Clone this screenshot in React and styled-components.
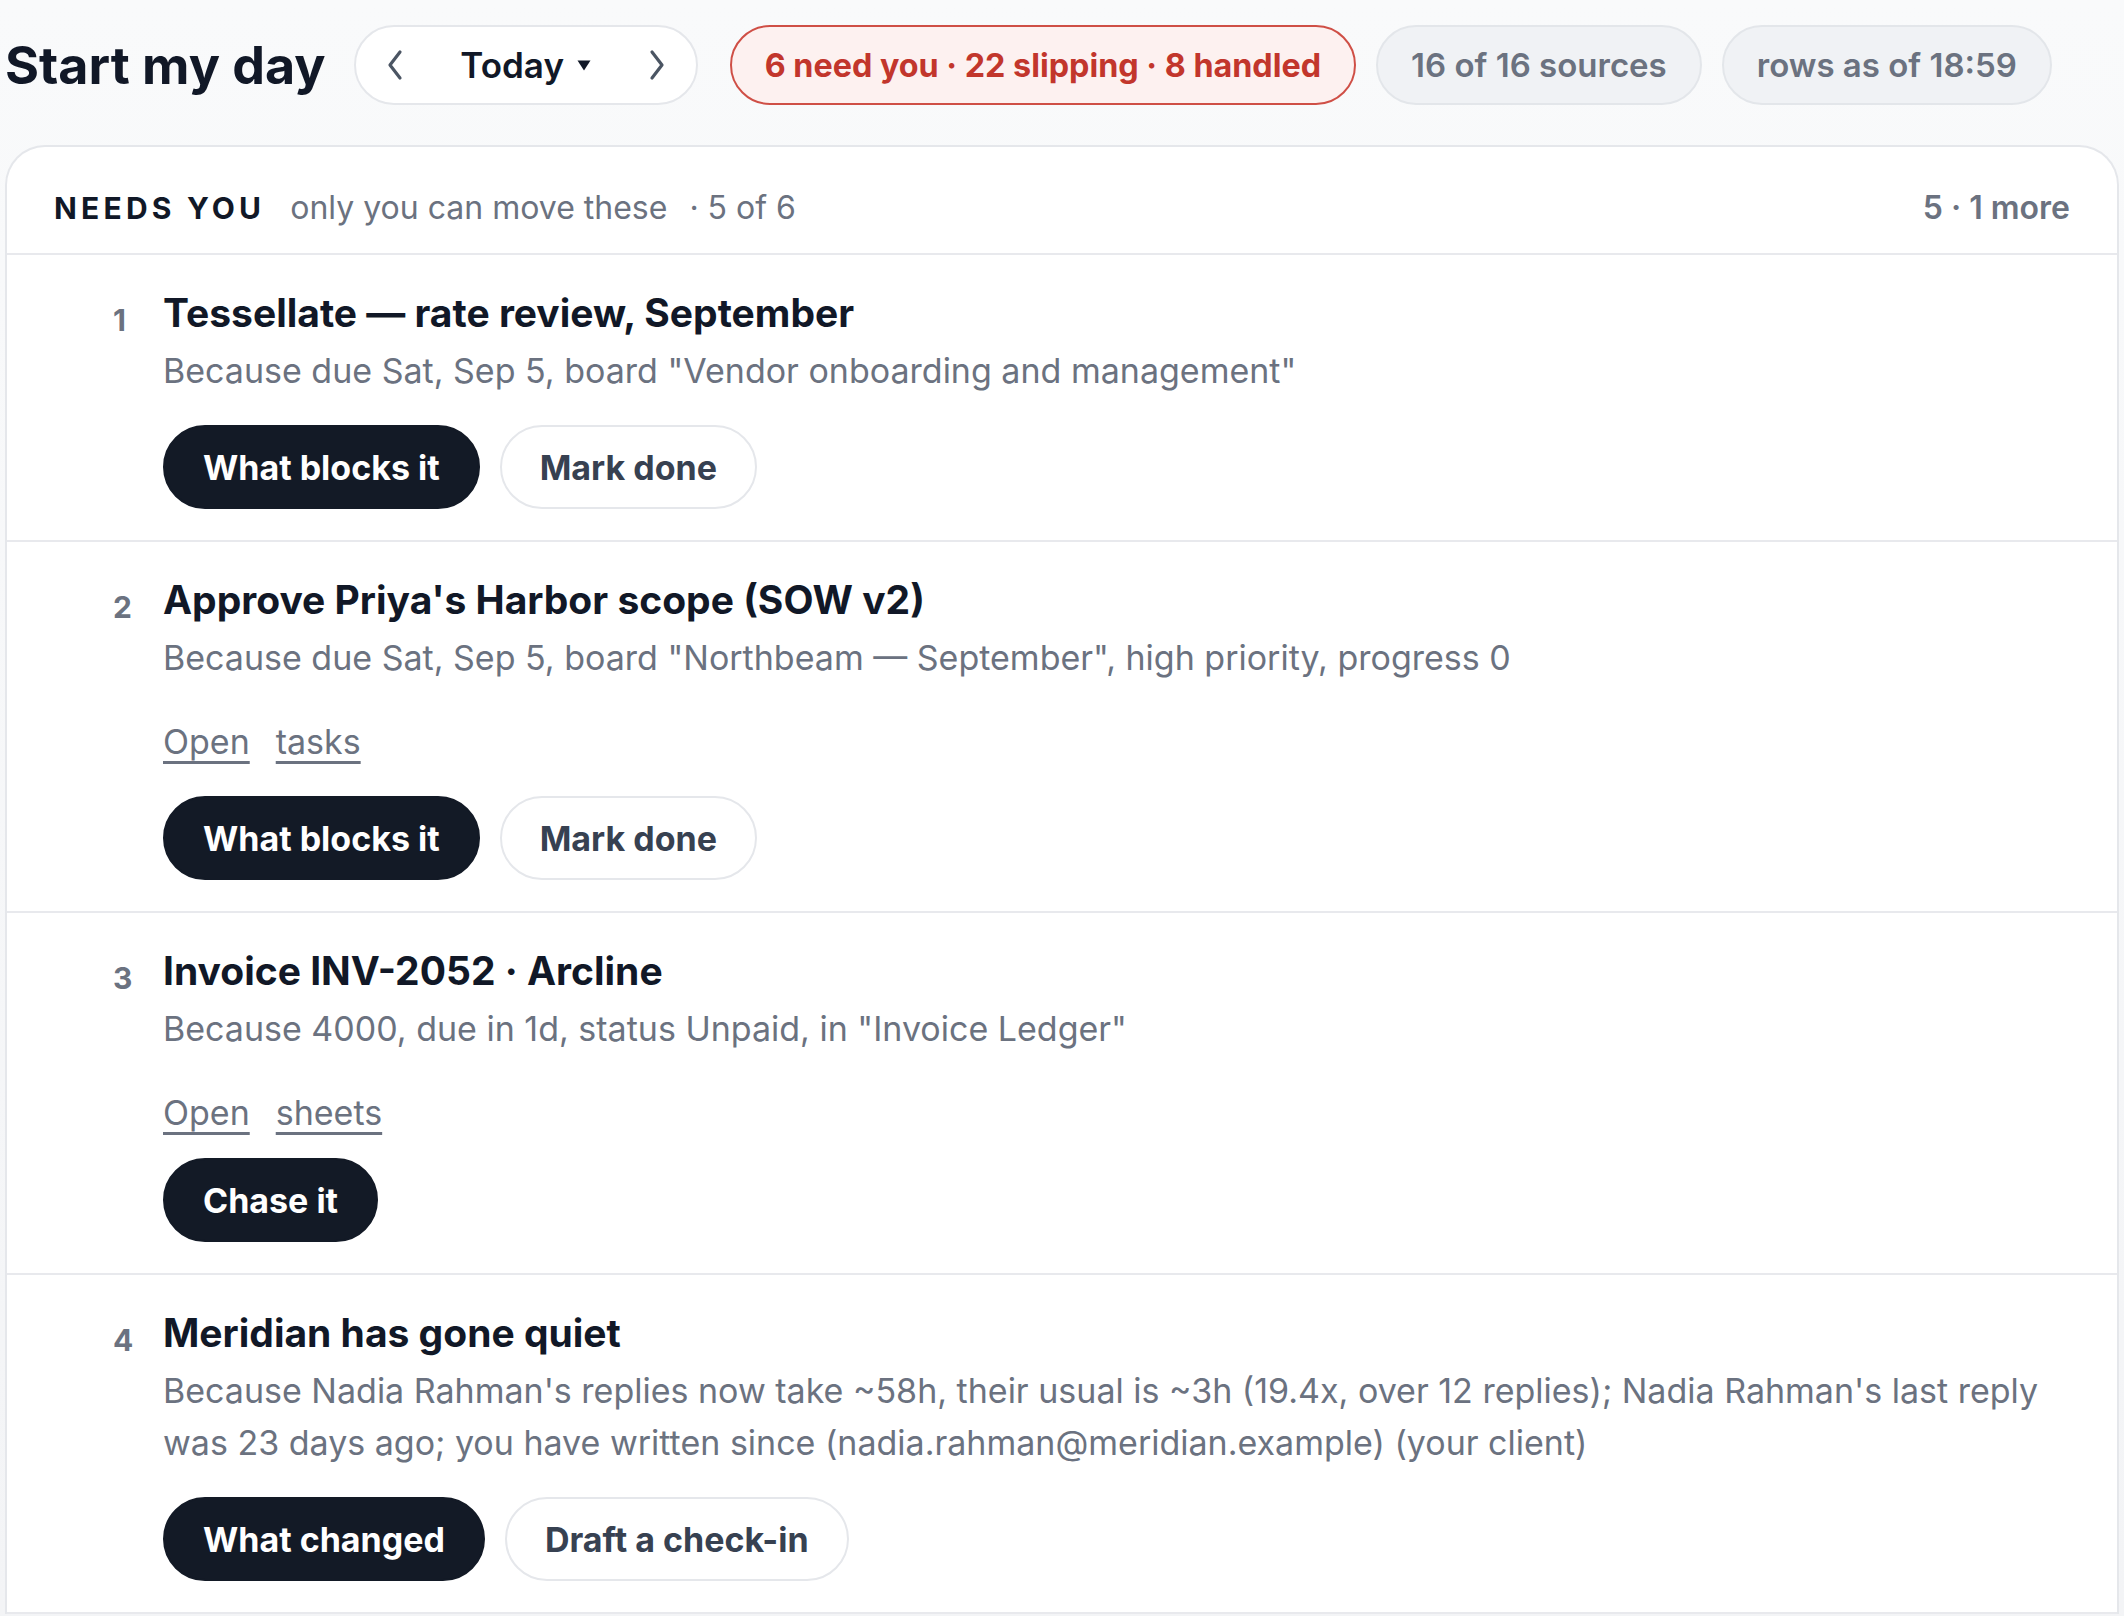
import React from "react";
import styled, { createGlobalStyle, css } from "styled-components";

const GlobalStyle = createGlobalStyle`
  * {
    box-sizing: border-box;
  }
  html,
  body {
    margin: 0;
    min-height: 100%;
  }
  body {
    background: linear-gradient(180deg, #f9fafb 0%, #f3f4f6 100%);
    font-family: Inter, "Noto Sans", sans-serif;
    color: #111827;
  }
`;

const items = [
  {
    title: "Tessellate — rate review, September",
    reason: 'Because due Sat, Sep 5, board "Vendor onboarding and management"',
    links: [],
    actions: ["What blocks it", "Mark done"],
  },
  {
    title: "Approve Priya's Harbor scope (SOW v2)",
    reason:
      'Because due Sat, Sep 5, board "Northbeam — September", high priority, progress 0',
    links: ["Open", "tasks"],
    actions: ["What blocks it", "Mark done"],
  },
  {
    title: "Invoice INV-2052 · Arcline",
    reason: 'Because 4000, due in 1d, status Unpaid, in "Invoice Ledger"',
    links: ["Open", "sheets"],
    actions: ["Chase it"],
  },
  {
    title: "Meridian has gone quiet",
    reason:
      "Because Nadia Rahman's replies now take ~58h, their usual is ~3h (19.4x, over 12 replies); Nadia Rahman's last reply was 23 days ago; you have written since (nadia.rahman@meridian.example) (your client)",
    links: [],
    actions: ["What changed", "Draft a check-in"],
  },
];

function Chevron({ dir }) {
  return (
    <svg width="18" height="32" viewBox="0 0 18 32" fill="none">
      <path
        d={dir === "left" ? "M14 3 L4 16 L14 29" : "M4 3 L14 16 L4 29"}
        stroke="#4b5563"
        strokeWidth="3.2"
        strokeLinecap="round"
        strokeLinejoin="round"
      />
    </svg>
  );
}

function Caret() {
  return (
    <svg width="14" height="11" viewBox="0 0 14 11">
      <path d="M0.5 0.5 H13.5 L7 10.5 Z" fill="#111827" />
    </svg>
  );
}

export default function App() {
  return (
    <Page>
      <GlobalStyle />
      <TopBar>
        <Title>Start my day</Title>
        <DateNav>
          <Chevron dir="left" />
          <DateLabel>
            Today <Caret />
          </DateLabel>
          <Chevron dir="right" />
        </DateNav>
        <Pill tone="alert">6 need you · 22 slipping · 8 handled</Pill>
        <Pill>16 of 16 sources</Pill>
        <Pill>rows as of 18:59</Pill>
      </TopBar>

      <Card>
        <CardHeader>
          <Kicker>NEEDS YOU</Kicker>
          <Hint>only you can move these</Hint>
          <Count>· 5 of 6</Count>
          <More>5 · 1 more</More>
        </CardHeader>

        {items.map((item, i) => (
          <Item key={item.title}>
            <Rank>{i + 1}</Rank>
            <Body>
              <ItemTitle>{item.title}</ItemTitle>
              <Reason>{item.reason}</Reason>
              {item.links.length > 0 && (
                <Links>
                  {item.links.map((l) => (
                    <Link key={l} href="#">
                      {l}
                    </Link>
                  ))}
                </Links>
              )}
              <Actions single={item.actions.length === 1}>
                {item.actions.map((a, j) => (
                  <Button key={a} primary={j === 0}>
                    {a}
                  </Button>
                ))}
              </Actions>
            </Body>
          </Item>
        ))}
      </Card>
    </Page>
  );
}

const Page = styled.div`
  padding: 25px 5px 0 5px;
`;

const TopBar = styled.header`
  display: flex;
  align-items: center;
  gap: 20px;
  margin-bottom: 40px;
`;

const Title = styled.h1`
  margin: 0 8px 0 0;
  font-size: 52px;
  font-weight: 700;
  color: #111827;
`;

const DateNav = styled.div`
  display: flex;
  align-items: center;
  justify-content: space-between;
  width: 344px;
  height: 80px;
  padding: 0 30px;
  margin-right: 12px;
  background: #ffffff;
  border: 2px solid #e5e7eb;
  border-radius: 40px;
`;

const DateLabel = styled.span`
  display: inline-flex;
  align-items: center;
  gap: 13px;
  font-size: 35px;
  font-weight: 600;
  color: #111827;
`;

const Pill = styled.div`
  display: flex;
  align-items: center;
  height: 80px;
  padding: 0 33px;
  border-radius: 40px;
  font-weight: 600;
  white-space: nowrap;
  ${({ tone }) =>
    tone === "alert"
      ? css`
          font-size: 32.3px;
          background: #fdf1f0;
          border: 2px solid #cf4f46;
          color: #c2362c;
          font-weight: 700;
        `
      : css`
          font-size: 33px;
          background: #f0f2f5;
          border: 2px solid #e3e6ea;
          color: #6b7280;
        `}
`;

const Card = styled.section`
  background: #ffffff;
  border: 2px solid #e5e7eb;
  border-bottom: none;
  border-radius: 40px 40px 0 0;
`;

const CardHeader = styled.div`
  display: flex;
  align-items: baseline;
  padding: 39px 47px 23px;
  border-bottom: 2px solid #e8e9ed;
  line-height: 44px;
`;

const Kicker = styled.span`
  font-size: 30px;
  font-weight: 700;
  letter-spacing: 4.2px;
  color: #111827;
`;

const Hint = styled.span`
  margin-left: 25px;
  font-size: 32px;
  color: #6b7280;
`;

const Count = styled.span`
  margin-left: 22px;
  font-size: 32px;
  color: #6b7280;
`;

const More = styled.span`
  margin-left: auto;
  font-size: 32px;
  font-weight: 600;
  color: #6b7280;
`;

const Item = styled.article`
  display: grid;
  grid-template-columns: 30px 1fr;
  column-gap: 20px;
  padding: 30px 47px 31px 106px;
  border-bottom: 2px solid #e8e9ed;
`;

const Rank = styled.span`
  padding-top: 7px;
  font-size: 30px;
  font-weight: 700;
  line-height: 56px;
  color: #6b7280;
`;

const Body = styled.div`
  display: flex;
  flex-direction: column;
  align-items: flex-start;
`;

const ItemTitle = styled.h3`
  margin: 0;
  font-size: 39px;
  font-weight: 700;
  line-height: 56px;
  color: #111827;
`;

const Reason = styled.p`
  margin: 4px 0 0;
  font-size: 34px;
  line-height: 52px;
  color: #6b7280;
`;

const Links = styled.div`
  display: flex;
  gap: 26px;
  margin-top: 32px;
`;

const Link = styled.a`
  font-size: 34px;
  line-height: 52px;
  color: #6b7280;
  text-decoration: underline;
  text-decoration-thickness: 3px;
  text-underline-offset: 7px;
`;

const Actions = styled.div`
  display: flex;
  gap: 20px;
  margin-top: ${({ single }) => (single ? "19px" : "28px")};
`;

const Button = styled.button`
  height: 84px;
  padding: 0 38px;
  border-radius: 42px;
  font-family: inherit;
  font-size: 34px;
  font-weight: 700;
  cursor: pointer;
  ${({ primary }) =>
    primary
      ? css`
          background: #131a26;
          border: 2px solid #131a26;
          color: #ffffff;
        `
      : css`
          background: #ffffff;
          border: 2px solid #e5e7eb;
          color: #374151;
        `}
`;
